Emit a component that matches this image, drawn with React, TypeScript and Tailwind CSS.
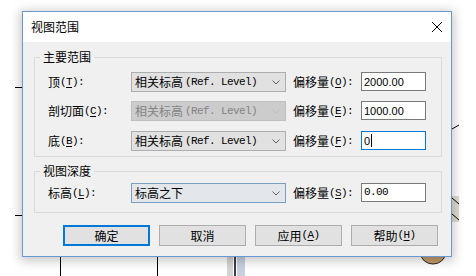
import React from 'react';

const cjk = "font-['Noto_Sans_CJK_SC',sans-serif]";
const mono = "font-['Liberation_Mono',monospace] text-[11px] tracking-[-0.6px]";

// label such as 顶(T):  -- CJK part plus half-width mnemonic part
const Lbl: React.FC<{ cn: string; k: string }> = ({ cn, k }) => (
  <span className="flex items-center whitespace-nowrap">
    <span className={`${cjk} text-[12px] leading-[14px]`}>{cn}</span>
    <span className={mono}>
      (<span className="underline underline-offset-[2px]">{k}</span>):
    </span>
  </span>
);

const Chevron: React.FC<{ color: string }> = ({ color }) => (
  <svg width="8" height="5" viewBox="0 0 8 5" className="shrink-0">
    <polyline points="0.5,0.5 4,4 7.5,0.5" fill="none" stroke={color} strokeWidth="1" />
  </svg>
);

const Combo: React.FC<{ variant?: 'normal' | 'disabled' | 'hover'; children: React.ReactNode }> = ({
  variant = 'normal',
  children,
}) => {
  const tone =
    variant === 'disabled'
      ? 'border-[#bfbfbf] bg-[#cccccc] text-[#838383]'
      : variant === 'hover'
      ? 'border-[#7a9ec2] bg-[#e3e7eb] text-black'
      : 'border-[#adadad] bg-[#e1e1e1] text-black';
  return (
    <div className={`w-[155px] h-[20px] border ${tone} flex items-center justify-between pl-[3px] pr-[5px]`}>
      <span className="flex items-center whitespace-nowrap">{children}</span>
      <Chevron color={variant === 'disabled' ? '#bfbfbf' : '#606060'} />
    </div>
  );
};

const RefLevel = () => (
  <>
    <span className={`${cjk} text-[12px] leading-[14px]`}>相关标高</span>
    <span className={`${mono} ml-[2px]`}>(Ref. Level)</span>
  </>
);

const Field: React.FC<{ focused?: boolean; children: React.ReactNode }> = ({ focused, children }) => (
  <div
    className={`w-[65px] h-[19px] border ${
      focused ? 'border-[#0078d7]' : 'border-[#7a7a7a]'
    } bg-white flex items-center pl-[2px] text-black`}
  >
    {children}
  </div>
);

const num = "font-['Liberation_Sans',sans-serif] text-[11px] leading-[14px]";

const Row: React.FC<{ label: React.ReactNode; combo: React.ReactNode; off: React.ReactNode; field: React.ReactNode; className?: string }> = ({
  label,
  combo,
  off,
  field,
  className = '',
}) => (
  <div className={`flex items-start h-[20px] ${className}`}>
    <div className="w-[83px] h-[20px] flex items-center">{label}</div>
    {combo}
    <div className="ml-[7px] w-[68px] h-[20px] flex items-center">{off}</div>
    {field}
  </div>
);

const Group: React.FC<{ title: string; className?: string; children: React.ReactNode }> = ({ title, className = '', children }) => (
  <div className={`relative border border-[#dcdcdc] pl-[13px] ${className}`}>
    <span className={`absolute left-[5px] top-[-9px] px-[3px] bg-[#f0f0f0] ${cjk} text-[12px] leading-[16px]`}>{title}</span>
    {children}
  </div>
);

const Btn: React.FC<{ primary?: boolean; children: React.ReactNode }> = ({ primary, children }) => (
  <div
    className={`w-[87px] h-[21px] bg-[#e1e1e1] flex items-center justify-center ${
      primary ? 'border-2 border-[#0078d7]' : 'border border-[#adadad]'
    }`}
  >
    <span className="flex items-center">{children}</span>
  </div>
);

export default function App() {
  return (
    <div className="relative w-[476px] h-[276px] bg-white overflow-hidden pl-[22px] pt-[11px] text-black">
      {/* drawing behind the dialog */}
      <svg className="absolute inset-0" width="476" height="276" viewBox="0 0 476 276">
        <line x1="15" y1="87.5" x2="23" y2="87.5" stroke="#000" />
        <line x1="15" y1="215.5" x2="23" y2="215.5" stroke="#000" />
        <line x1="60.5" y1="257" x2="60.5" y2="276" stroke="#000" />
        <line x1="157.5" y1="257" x2="157.5" y2="276" stroke="#000" />
        <rect x="227" y="257" width="6" height="19" fill="#d4d4d4" />
        <rect x="234" y="257" width="2" height="19" fill="#404040" />
        <rect x="237" y="257" width="8" height="19" fill="#c8d0de" />
        <rect x="452" y="196" width="7" height="26" fill="#dedbd0" />
        <line x1="452" y1="198" x2="459" y2="204" stroke="#000" />
        <line x1="452" y1="214" x2="459" y2="220" stroke="#000" />
        <line x1="452" y1="129" x2="459" y2="125" stroke="#000" />
        <path d="M421 254 A12 10 0 0 0 445 254 Z" fill="#c49a68" stroke="#222" strokeWidth="1" />
      </svg>

      <div className="relative flex flex-col w-[430px] h-[246px] border border-[#6a98d4] bg-[#f0f0f0] shadow-[0_2px_10px_2px_rgba(0,0,0,0.22)]">
        {/* title bar */}
        <div className="h-[30px] bg-white flex items-center justify-between pl-[8px] pr-[9px]">
          <span className={`${cjk} text-[12px] leading-[14px]`}>视图范围</span>
          <svg width="10" height="10" viewBox="0 0 10 10">
            <line x1="0" y1="0" x2="10" y2="10" stroke="#000" strokeWidth="1" />
            <line x1="10" y1="0" x2="0" y2="10" stroke="#000" strokeWidth="1" />
          </svg>
        </div>

        {/* body */}
        <div className="flex-1 pl-[11px] pr-[9px]">
          <Group title="主要范围" className="mt-[15px] pt-[14px] pb-[5px]">
            <Row
              label={<Lbl cn="顶" k="T" />}
              combo={<Combo><RefLevel /></Combo>}
              off={<Lbl cn="偏移量" k="O" />}
              field={<Field><span className={num}>2000.00</span></Field>}
            />
            <Row
              className="mt-[9px]"
              label={<Lbl cn="剖切面" k="C" />}
              combo={<Combo variant="disabled"><RefLevel /></Combo>}
              off={<Lbl cn="偏移量" k="E" />}
              field={<Field><span className={num}>1000.00</span></Field>}
            />
            <Row
              className="mt-[10px]"
              label={<Lbl cn="底" k="B" />}
              combo={<Combo><RefLevel /></Combo>}
              off={<Lbl cn="偏移量" k="F" />}
              field={
                <Field focused>
                  <span className={num}>0</span>
                  <span className="ml-[1px] w-[1px] h-[13px] bg-black" />
                </Field>
              }
            />
          </Group>

          <Group title="视图深度" className="mt-[14px] pt-[11px] pb-[9px]">
            <Row
              label={<Lbl cn="标高" k="L" />}
              combo={
                <Combo variant="hover">
                  <span className={`${cjk} text-[12px] leading-[14px]`}>标高之下</span>
                </Combo>
              }
              off={<Lbl cn="偏移量" k="S" />}
              field={<Field><span className={mono}>0.00</span></Field>}
            />
          </Group>

          <div className="flex gap-[9px] mt-[12px] ml-[29px]">
            <Btn primary>
              <span className={`${cjk} text-[12px] leading-[14px]`}>确定</span>
            </Btn>
            <Btn>
              <span className={`${cjk} text-[12px] leading-[14px]`}>取消</span>
            </Btn>
            <Btn>
              <span className={`${cjk} text-[12px] leading-[14px]`}>应用</span>
              <span className={mono}>
                (<span className="underline underline-offset-[2px]">A</span>)
              </span>
            </Btn>
            <Btn>
              <span className={`${cjk} text-[12px] leading-[14px]`}>帮助</span>
              <span className={mono}>
                (<span className="underline underline-offset-[2px]">H</span>)
              </span>
            </Btn>
          </div>
        </div>
      </div>
    </div>
  );
}
